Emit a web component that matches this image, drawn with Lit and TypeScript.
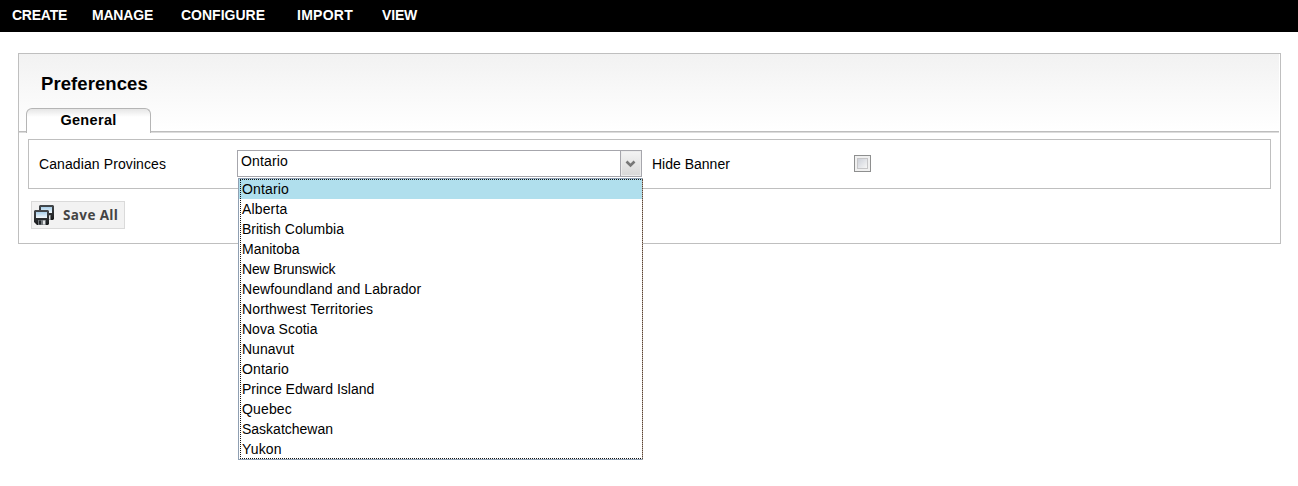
import { LitElement, html, css, svg } from "lit";
import { customElement, state } from "lit/decorators.js";

const MENU = ["CREATE", "MANAGE", "CONFIGURE", "IMPORT", "VIEW"];

const PROVINCES: [string, string][] = [
  ["Ontario", "loose"],
  ["Alberta", "loose"],
  ["British Columbia", ""],
  ["Manitoba", ""],
  ["New Brunswick", "tight"],
  ["Newfoundland and Labrador", "airy"],
  ["Northwest Territories", "loose"],
  ["Nova Scotia", ""],
  ["Nunavut", ""],
  ["Ontario", "loose"],
  ["Prince Edward Island", ""],
  ["Quebec", "loose"],
  ["Saskatchewan", ""],
  ["Yukon", "loose"],
];

const disk = (x: number, y: number) => svg`
  <g transform="translate(${x} ${y})">
    <path d="M1 0h13l1 1v13l-1 1h-11l-3-3v-11z" fill="url(#body)"/>
    <rect x="2" y="2" width="11" height="6" fill="url(#label)"/>
    <rect x="4" y="10" width="8" height="5" fill="#73787c"/>
    <rect x="5" y="10.5" width="2" height="4" fill="#24282c"/>
    <rect x="9" y="10.5" width="2" height="4" fill="#e3e5e6"/>
  </g>`;

@customElement("app-root")
export class AppRoot extends LitElement {
  @state() private selected = 0;

  static styles = css`
    :host {
      display: block;
      height: 486px;
      background: #fff;
      color: #000;
      font: 14px/20px "Liberation Sans", Arial, sans-serif;
    }
    * {
      box-sizing: border-box;
    }
    nav {
      display: flex;
      height: 32px;
      padding-left: 12px;
      background: #000;
      color: #fff;
      font-weight: bold;
      line-height: 31px;
    }
    .m0 { width: 80px; letter-spacing: -0.25px; }
    .m1 { width: 89px; letter-spacing: -0.2px; }
    .m2 { width: 116px; }
    .m3 { width: 85px; letter-spacing: 0.25px; }
    .m4 { letter-spacing: -0.15px; }
    .panel {
      width: 1263px;
      height: 191px;
      margin: 21px 0 0 18px;
      border: 1px solid #bfbfbf;
    }
    .head {
      display: flex;
      flex-direction: column;
      justify-content: space-between;
      width: 1260px;
      height: 79px;
      padding: 20px 0 0 7px;
      border-bottom: 1px solid #dcdcdc;
      background: linear-gradient(#f2f2f2, #fff 76px);
      box-shadow: inset 0 -1px #bdbdbd;
    }
    h1 {
      margin: 0 0 0 15px;
      font-size: 18.5px;
      line-height: 20px;
      letter-spacing: 0.08px;
    }
    .tab {
      width: 125px;
      height: 25px;
      margin-bottom: -1px;
      border: 1px solid #b5b5b5;
      border-width: 1px 1px 0;
      border-radius: 6px 6px 0 0;
      background: linear-gradient(#e6e6e6, #fff 8px);
      font-weight: bold;
      font-size: 14.5px;
      line-height: 23px;
      letter-spacing: 0.32px;
      text-align: center;
    }
    .fields {
      display: flex;
      width: 1243px;
      height: 50px;
      margin: 6px 0 0 9px;
      padding: 10px 0 0 10px;
      border: 1px solid #bfbfbf;
    }
    .label {
      width: 198px;
      padding-top: 4px;
      letter-spacing: 0.1px;
    }
    .combo {
      position: relative;
      display: flex;
      justify-content: space-between;
      width: 405px;
      height: 27px;
      border: 1px solid #a6a6ac;
      padding-left: 3px;
    }
    .loose { letter-spacing: 0.15px; }
    .airy { letter-spacing: 0.1px; }
    .tight { letter-spacing: -0.18px; }
    .arrow {
      width: 21px;
      height: 25px;
      border-left: 1px solid #a6a6ac;
      background: linear-gradient(#f4f4f4, #d8d8d8);
      box-shadow: inset 0 0 0 1px #ececec;
    }
    .arrow svg,
    .save svg {
      display: block;
    }
    .list {
      position: absolute;
      left: 0;
      top: 27px;
      width: 405px;
      height: 282px;
      border: 1px solid #8f9fb2;
      border-right-color: #b5a698;
      background: #fff;
    }
    .list::after {
      content: "";
      position: absolute;
      inset: 0 -1px 0 1px;
      border: 1px dotted #111;
      border-right-color: #5a4436;
    }
    .option {
      height: 20px;
      padding-left: 3px;
    }
    .active {
      background: #b0dfed;
    }
    .banner {
      width: 212px;
      padding: 4px 0 0 10px;
    }
    .check {
      width: 17px;
      height: 17px;
      margin-top: 5px;
      border: 1px solid #8e8f8f;
      padding: 2px;
      background: #f0f0f0;
    }
    .check i {
      display: block;
      height: 11px;
      border: 1px solid #c6c6c8;
      background: linear-gradient(135deg, #cdd1d9, #f6f6f6);
    }
    .save {
      display: flex;
      align-items: center;
      width: 94px;
      height: 28px;
      margin: 12px 0 0 12px;
      padding: 0 0 0 2px;
      gap: 8px;
      border: 1px solid #dadada;
      background: #f2f2f2;
      color: #444;
      font: bold 13.5px/26px "Open Sans", sans-serif;
      letter-spacing: 0.38px;
      white-space: nowrap;
    }
  `;

  render() {
    return html`
      <nav>${MENU.map((m, i) => html`<span class="m${i}">${m}</span>`)}</nav>
      <section class="panel">
        <div class="head">
          <h1>Preferences</h1>
          <div class="tab">General</div>
        </div>
        <div class="fields">
          <span class="label">Canadian Provinces</span>
          <div class="combo">
            <span class="loose">${PROVINCES[this.selected][0]}</span>
            <div class="arrow">
              <svg width="20" height="25"><path d="M5.5 10.5l4 4 4-4" fill="none" stroke="#777" stroke-width="2.6"/></svg>
            </div>
            <div class="list">
              ${PROVINCES.map(
                ([name, spacing], i) => html`<div class="option ${spacing} ${i === this.selected ? "active" : ""}" @click=${() => (this.selected = i)}>${name}</div>`
              )}
            </div>
          </div>
          <span class="banner">Hide Banner</span>
          <div class="check"><i></i></div>
        </div>
        <div class="save">
          <svg width="21" height="20" viewBox="0 0 21 20">
            <defs>
              <linearGradient id="body" x2="0" y2="1"><stop stop-color="#45494d"/><stop offset="1" stop-color="#17191b"/></linearGradient>
              <linearGradient id="label" x2="0" y2="1"><stop stop-color="#a9cfea"/><stop offset="1" stop-color="#f4f9fc"/></linearGradient>
            </defs>
            ${disk(5, 0)}${disk(0, 5)}
          </svg>
          <span>Save All</span>
        </div>
      </section>
    `;
  }
}
